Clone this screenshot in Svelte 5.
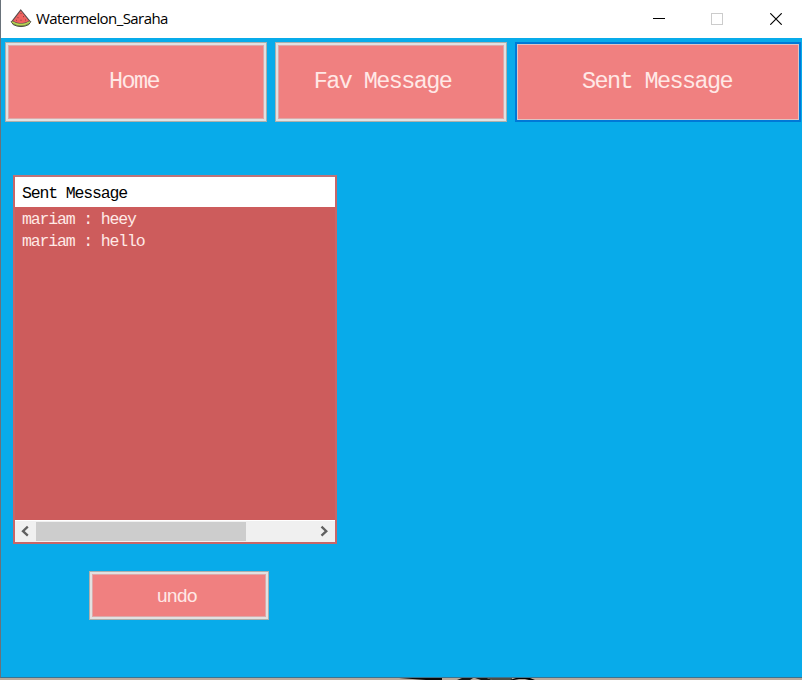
<script>
  const tabs = [
    { label: 'Home', name: 'home' },
    { label: 'Fav Message', name: 'fav' },
    { label: 'Sent Message', name: 'sent' }
  ];
  const messages = ['mariam : heey', 'mariam : hello'];
</script>

<div class="screen">
  <main class="window">
    <header>
      <svg class="logo" width="22" height="20" viewBox="0 0 22 20">
        <path d="M1.2 12.5Q11 20.2 20.8 12.5L18.8 15.6Q11 19.6 3.2 15.6Z" fill="#8caa3c" stroke="#4d4f42" />
        <path d="M10.8 1 19.8 12.2Q11 17.3 2.2 12.2Z" fill="#f0625f" stroke="#5b4b4b" stroke-width="1.1" />
        <path d="M2.4 12.3Q11 17.3 19.6 12.3L20.3 13.4Q11 19.4 1.7 13.4Z" fill="#b9d850" />
        <path d="M11 4v1M8 8v1.2M13.5 7v1.2M11 10.7v1.2M6.5 10.8v1M15.5 10.5v1" stroke="#8b4147" />
      </svg>
      <span class="title">Watermelon_Saraha</span>
      <div class="controls">
        <svg width="12" height="12"><path d="M0 5.5H12" stroke="#000" /></svg>
        <svg width="12" height="12"><rect x=".5" y=".5" width="11" height="11" fill="none" stroke="#ccc" /></svg>
        <svg width="12" height="12"><path d="M.3.3 11.7 11.7M11.7.3.3 11.7" stroke="#000" stroke-width="1.15" /></svg>
      </div>
    </header>
    <nav>
      {#each tabs as tab}
        <button class={tab.name}><span>{tab.label}</span></button>
      {/each}
    </nav>
    <section class="list">
      <div class="heading">Sent Message</div>
      <div class="rows">
        {#each messages as message}<div class="row">{message}</div>{/each}
      </div>
      <div class="scrollbar">
        <svg width="21" height="20"><path d="M12.8 5.7 8 10.2 12.8 14.7" /></svg>
        <div class="thumb"></div>
        <svg class="right" width="22" height="20"><path d="M8.5 5.7 13.3 10.2 8.5 14.7" /></svg>
      </div>
    </section>
    <button class="undo"><span>undo</span></button>
  </main>
  <svg class="backdrop" width="802" height="2">
    <rect width="802" height="2" fill="#b8a99b" />
    <path d="M399 0H442V2H426Z" fill="#090909" />
    <path d="M457 2 462 0H473L470 2ZM475 0H487L492 2H481Z" fill="#171614" />
    <path d="M487 0H512V2H492Z" fill="#4d4e46" />
    <path d="M510 2 516 0H530L535 2H529L525 1H519L514 2Z" fill="#000" />
  </svg>
</div>

<style>
  :global(body) { margin: 0; overflow: hidden; background: #b8a99b; }
  * { box-sizing: border-box; }
  .screen { width: 802px; height: 680px; }
  .window { width: 802px; height: 678px; border-left: 1px solid #69727a; border-bottom: 1px solid #3b7390; background: #08abea; }
  header { height: 38px; display: flex; align-items: center; background: #fff; }
  .logo { margin: 0 0 1px 9px; }
  .title { margin: 0 0 2px 4px; color: #000; font: 15px/20px "Open Sans", "Noto Sans", sans-serif; letter-spacing: -.57px; }
  .controls { display: flex; gap: 47px; margin-left: auto; margin-right: 20px; }
  .controls svg:first-child { margin-right: -1px; }
  svg { display: block; flex: none; }
  nav { display: flex; padding: 4px 0 0 4px; gap: 8px; }
  button { display: flex; align-items: center; justify-content: center; padding: 0; border: 1px solid #adafac; border-radius: 0; background: #f08080; box-shadow: inset 0 0 0 2px #e1e1e1, inset 0 0 0 3px #dda9a9; color: #ffe8e6; font-family: "Liberation Mono", monospace; }
  nav button { height: 80px; padding-bottom: 1px; font-size: 23.5px; letter-spacing: -1.6px; white-space: pre; }
  .home { width: 262px; padding-right: 4px; }
  .fav { width: 232px; padding-right: 17px; }
  .sent { width: 286px; padding-right: 2px; border: 2px solid #0078d7; box-shadow: inset 0 0 0 1px #ddc4c4; }
  .list { width: 324px; height: 369px; margin: 53px 0 0 12px; border: 2px solid #c76668; border-top-color: #bd7479; background: #cd5c5c; font: 16.5px/22px "Liberation Mono", monospace; letter-spacing: -1.15px; display: flex; flex-direction: column; }
  .heading { height: 30px; padding: 6px 0 0 7px; background: #fff; color: #000; }
  .rows { flex: 1; padding: 2px 0 0 7px; color: #ffe9e6; }
  .row { height: 22px; white-space: pre; }
  .scrollbar { height: 22px; padding-bottom: 1px; display: flex; align-items: center; background: #f0f0f0; border-top: 1px solid #fff; }
  .scrollbar path { fill: none; stroke: #606060; stroke-width: 2.3; }
  .thumb { width: 210px; height: 19px; background: #cdcdcd; }
  .right { margin-left: auto; }
  .undo { width: 180px; height: 49px; margin: 27px 0 0 88px; padding: 2px 5px 0 0; font-size: 19px; letter-spacing: -1.4px; }
</style>
